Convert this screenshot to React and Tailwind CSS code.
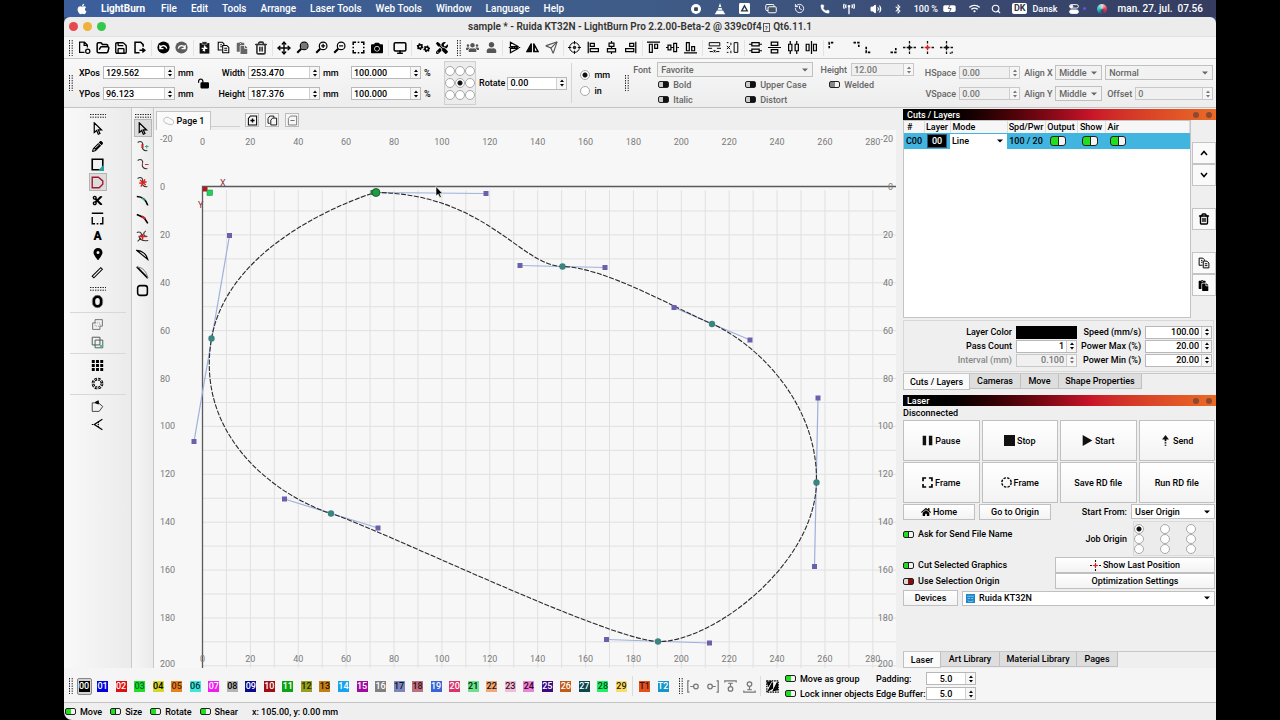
import { Fragment, useState } from "react";
import clsx from "clsx";
import { FaApple, FaBluetoothB, FaCamera, FaCut, FaHome, FaPaste, FaUsers, FaUser, FaWifi } from "react-icons/fa";
import { FaGears, FaLocationDot, FaLockOpen, FaPencil, FaScrewdriverWrench, FaTowerBroadcast } from "react-icons/fa6";
import { FolderOpen, History, Monitor, Move, Phone, Save, Search, Send, Trash2, Volume2 } from "lucide-react";

const Svg = ({ children, className = "size-[13px]", sw = 1.5 }) => (
  <svg viewBox="0 0 16 16" className={className} fill="none" stroke="currentColor" strokeWidth={sw} aria-hidden="true">
    {children}
  </svg>
);

const Grip = ({ wide }) => (
  <svg
    viewBox={wide ? "0 0 16 4" : "0 0 4 16"}
    className={wide ? "h-1 w-4 shrink-0" : "h-4 w-1 shrink-0"}
    fill="none"
    stroke="#222"
    strokeWidth="1"
    strokeDasharray="1.4 1.1"
    aria-hidden="true"
  >
    <path d={wide ? "M0 .5H16M0 3.2H16" : "M.5 0V16M3.2 0V16"} />
  </svg>
);

const Mag = ({ children }) => (
  <Svg>
    <circle cx="10" cy="6" r="4.7" />
    <path d="M6.5 9.5L1.5 14.5" strokeWidth="2.6" />
    {children}
  </Svg>
);

const CrossMark = ({ color = "#111", className = "size-[13px]", extra }) => (
  <Svg className={className} sw={1.6}>
    <path d="M8 0V3M8 13V16M0 8H3M13 8H16" stroke="#111" />
    <path d="M8 4.5V11.5M4.5 8H11.5" stroke={color} />
    <path d="M7 7H9V9H7Z" fill={color} stroke={color} strokeWidth="1" />
    {extra && <path d="M12 15H15V12" stroke="#111" strokeDasharray="2 1" />}
  </Svg>
);

const CopyDocs = ({ className }) => (
  <Svg sw={1.3} className={className}>
    <path d="M6 11H1.500V1.500H6.500L8.500 3.500V5M4 4.500H6M4 7H6" />
    <path d="M7 5.500H12L14.500 8V14.500H7ZM9 9H12.500M9 11.500H12.500" />
  </Svg>
);

// null is a separator, "grip" a drag handle
const mainTools = [
  "grip",
  ["New", <Svg><path d="M8 14H2V1.500H8L11.500 5V8M7.500 1.500V5.500H11.500" /><circle cx="12" cy="12.500" r="2.600" /></Svg>],
  ["Open", <FolderOpen className="size-[14px]" strokeWidth={2.6} />],
  ["Save", <Save className="size-[14px]" strokeWidth={2.3} />],
  ["Export", <Svg><path d="M12.500 7V4.500L9.500 1.500H2.500V14.500H8M8 11.500H14M11.500 9L14.500 11.500L11.500 14" strokeWidth="1.900" /></Svg>],
  null,
  ["Undo", <Svg><circle cx="8" cy="8" r="7.500" fill="#000" stroke="none" /><path d="M4 9C5 4.500 11 4.500 12 9.500M3.500 5V9.500H8" stroke="#fff" /></Svg>],
  ["Redo", <Svg><circle cx="8" cy="8" r="7.500" fill="#5c5c5c" stroke="none" /><path d="M12 9C11 4.500 5 4.500 4 9.500M12.500 5V9.500H8" stroke="#fff" /></Svg>],
  null,
  ["Cut", <Svg><path d="M2 2.500H14V15.500H2Z" fill="#111" stroke="none" /><path d="M5 1H11V4H5Z" fill="#111" stroke="#fff" strokeWidth=".6" /><path d="M8 5.500V13M4.500 9H11.500M6 12L10 7" stroke="#fff" /></Svg>],
  ["Copy", <CopyDocs className="size-[13px]" />],
  ["Paste", <FaPaste className="size-[12px] text-[#666]" />],
  ["Delete", <Trash2 className="size-[14px] text-[#333]" strokeWidth={2.8} />],
  null,
  ["Pan", <Move className="size-[14px]" strokeWidth={2.4} />],
  ["Zoom to page", <Mag><circle cx="10" cy="6" r="4" fill="#777" stroke="none" /></Mag>],
  ["Zoom in", <Mag><path d="M7.500 6H12.500M10 3.500V8.500" /></Mag>],
  ["Zoom out", <Mag><path d="M7.500 6H12.500" /></Mag>],
  ["Frame selection", <Svg sw={1.9}><path d="M1.500 5V1.500H5M11 1.500H14.500V5M14.500 11V14.500H11M5 14.500H1.500V11M7 1.500H9M7 14.500H9M1.500 7V9M14.500 7V9" /></Svg>],
  ["Capture", <FaCamera className="size-[12px]" />],
  null,
  ["Preview", <Monitor className="size-[14px]" strokeWidth={2.6} />],
  null,
  ["Settings", <FaGears className="size-[13px] -rotate-12" />],
  ["Device settings", <FaScrewdriverWrench className="size-[12px]" />],
  "gap",
  "grip",
  ["Group", <FaUsers className="size-[13px] text-[#555]" />],
  ["Ungroup", <FaUser className="size-[11px] text-[#555]" />],
  null,
  ["Flip vertical", <Svg><path d="M3 1.500L13 7H3ZM3 14.500L13 9H3Z" /><path d="M1 8H15" strokeDasharray="2 1" /></Svg>],
  ["Flip horizontal", <Svg><path d="M6.500 3V13H1ZM9.500 3V13H15Z" fill="#111" /><path d="M11 8V12H13.300Z" fill="#fff" stroke="none" /></Svg>],
  ["Mirror across line", <Send className="size-[13px] text-[#555]" />],
  null,
  ["Align centers", <Svg sw={1.2}><circle cx="8" cy="8" r="6" /><circle cx="8" cy="8" r="1.500" fill="#333" /><path d="M8 0V4M8 12V16M0 8H4M12 8H16" /></Svg>],
  ["Align left", <Svg><path d="M1.500 1V15M4 3H9V6.500H4ZM4 9.500H14V13H4Z" /></Svg>],
  ["Align horizontal center", <Svg><path d="M8 0V2M8 14V16M8 6.500V9.500M5 2.500H11V6.500H5ZM3 9.500H13V13.500H3Z" /></Svg>],
  ["Align right", <Svg><path d="M14.500 1V15M7 3H12V6.500H7ZM2 9.500H12V13H2Z" /></Svg>],
  null,
  ["Align top", <Svg><path d="M0 1.500H16M3 4H6.500V14H3ZM9.500 4H13V9H9.500Z" /></Svg>],
  ["Align vertical center", <Svg><path d="M0 8H2M14 8H16M6 8H9.500M2.500 5H6V11H2.500ZM9.500 3H13V13H9.500Z" /></Svg>],
  ["Align bottom", <Svg><path d="M0 14.500H16M3 2H6.500V12H3ZM9.500 7H13V12H9.500Z" /></Svg>],
  null,
  ["Same width", <Svg sw={1.2}><path d="M1.500 2H14.500V6H1.500ZM0 9H5M11 9H16M2 13H6M10 13H14M7 11L9 14M9 11L7 14" /></Svg>],
  ["Same height", <Svg sw={1.2}><path d="M10 2H14.500V14H10ZM1 2H3M6 2V5M1 6L5 10M5 6L1 10M6 12V15M1 14H3" /></Svg>],
  null,
  ["Distribute vertical", <Svg><path d="M3.500 2H12.500V6H3.500ZM3.500 10H12.500V14H3.500ZM0 4H3M13 4H16M0 12H3M13 12H16" /></Svg>],
  ["Space vertical", <Svg><path d="M4 1.500H12V5.500H4ZM4 10.500H12V14.500H4ZM0 8H16" /></Svg>],
  ["Distribute horizontal", <Svg><path d="M2 4H6V12H2ZM10 4H14V12H10ZM4 0V4M4 12V16M12 0V4M12 12V16" /></Svg>],
  ["Space horizontal", <Svg><path d="M1.500 4H5V12H1.500ZM10.500 4H14V12H10.500ZM8 0V16" /></Svg>],
  null,
  ["Move to upper left", <Svg sw={2}><path d="M1.500 9V2H8" strokeDasharray="3 1.500" /></Svg>],
  ["Move to upper right", <Svg sw={2}><path d="M8 2H14.500V9" strokeDasharray="3 1.500" /></Svg>],
  ["Move to lower left", <Svg sw={2}><path d="M1.500 7V14H8" strokeDasharray="3 1.500" /></Svg>],
  ["Move to lower right", <Svg sw={2}><path d="M8 14H14.500V7" strokeDasharray="3 1.500" /></Svg>],
  ["Move to center", <CrossMark />],
  ["Move laser to center", <CrossMark color="#d22" />],
  ["Move to position", <CrossMark extra />],
];

const arrow = <Svg><path d="M4 1V13L7 10.500L9 15L11 14L9 9.800H13Z" /></Svg>;

const drawTools = [
  ["Select", arrow],
  ["Draw lines", <FaPencil className="size-[11px]" />],
  ["Rectangle", <Svg sw={2}><path d="M1.500 1.500H14.500V14.500H1.500Z" /><path d="M15.500 10V15.500H10Z" fill="#2aa198" stroke="#2aa198" /></Svg>],
  ["Edit nodes", <Svg><path d="M1.500 1.500H9L14.500 6V10L10 14.500H1.500Z" stroke="#a01830" strokeWidth="1.700" /></Svg>, true],
  ["Trim", <FaCut className="size-[11px]" />],
  ["Tabs", <Svg><path d="M1.500 6V14.500H5M14.500 6V14.500H11M1 1.500H15M7 14.500H9" strokeWidth="1.700" /></Svg>],
  ["Text", <span className="text-xs leading-3 font-black">A</span>],
  ["Laser position", <FaLocationDot className="size-[12px]" />],
  ["Measure", <Svg sw={1.3}><path d="M1.500 12.500L12 2L14 4L3.500 14.500Z" /></Svg>],
  "grip",
  ["Offset", <Svg><rect x="3.500" y="2" width="9" height="12" rx="4.500" strokeWidth="3.400" /><rect x="1.600" y=".5" width="12.800" height="15" rx="6" stroke="#777" strokeWidth=".8" /></Svg>],
  null,
  ["Weld", <Svg sw={1.1}><path d="M5 2H14V10H11V14H2V6H5Z" stroke="#666" /><path d="M5 6H11V10M5 6V10H11" stroke="#999" strokeDasharray="1.500 1" /></Svg>],
  ["Boolean", <Svg sw={1.2}><path d="M1.500 1.500H11V11H1.500Z" stroke="#555" /><path d="M5 5H14.500V14.500H5Z" stroke="#3a665c" /><path d="M11 11H14V14H11Z" fill="#5b9" stroke="none" /></Svg>],
  null,
  ["Grid array", <Svg><path d="M1 3H15M1 8H15M1 13H15" strokeWidth="3.600" strokeDasharray="3.600 1.600" /></Svg>],
  ["Circular array", <Svg><circle cx="8" cy="8" r="5.500" strokeWidth="3.400" strokeDasharray="3 1.300" /><circle cx="8" cy="8" r="5.500" stroke="#ddd" strokeWidth="1.200" strokeDasharray="2 2.300" /></Svg>],
  null,
  ["Start point", <Svg sw={1.2}><path d="M1.500 3.500H9L14.500 8L10 14H1.500Z" stroke="#444" /><path d="M5 3L9 1V5Z" fill="#111" /></Svg>],
  ["Radius", <Svg><path d="M14 1.500L4 8L14 14.500" /><path d="M1 8H5M9 4.500V11.500" strokeDasharray="1.500 1" /></Svg>],
];

const squiggle = <path d="M2 3C7 0 9 4 8 7S9 14 14 13" stroke="#333" />;
const nodeTools = [
  ["Select node", arrow, true],
  ["Insert node", <Svg sw={1.3}>{squiggle}<path d="M8 5V10" stroke="#c22" strokeWidth="2.500" /><path d="M11 8H15.500M13.200 6V10.500" stroke="#2b8" /></Svg>],
  ["Delete node", <Svg sw={1.3}>{squiggle}<path d="M8 6V9M11 8H15.500" stroke="#c33" /></Svg>],
  ["Delete segment", <Svg sw={1.3}>{squiggle}<path d="M5 5L12 11M11 4L6 13M4 9L13 7" stroke="#d22" strokeWidth="1.800" /></Svg>],
  ["Smooth", <Svg sw={2}><path d="M1 3C8 3 13 8 14.500 14" /><path d="M7 4.500L11 8" stroke="#3a9" strokeWidth="1.600" /></Svg>],
  ["Corner", <Svg sw={2}><path d="M1 3L10 7L14.500 14" /><path d="M7 5.500L11.500 8.500" stroke="#c22" strokeWidth="2.600" /></Svg>],
  ["Break", <Svg sw={1.3}><path d="M1 3C7 1 8 6 5 8S7 14 15 13M12 1C8 4 9 8 14 8M2 14L6 10" stroke="#333" /><path d="M3 8H13M8 5V12" stroke="#c22" strokeWidth="2" /></Svg>],
  ["Curve to line", <Svg sw={1.4}><path d="M1 3C8 3 13 8 14.500 14ZM1 3L14.500 14" /></Svg>],
  ["Line to curve", <Svg sw={1.2}><path d="M1 1L14.500 15" strokeWidth="2" /><path d="M1 1C9 2 13 7 14.500 15" stroke="#777" /></Svg>],
  ["Close path", <Svg><rect x="2" y="2" width="12" height="12" rx="3" strokeWidth="1.900" /></Svg>],
];

const swatches = [
  ["00", "bg-black", "text-white"],
  ["01", "bg-[#0000e0]", "text-white"],
  ["02", "bg-[#e01010]", "text-white"],
  ["03", "bg-[#1fe01f]", "text-[#064]"],
  ["04", "bg-[#d6d62a]", "text-black"],
  ["05", "bg-[#e8821c]", "text-[#521]"],
  ["06", "bg-[#3fe6dc]", "text-[#033]"],
  ["07", "bg-[#f21cf2]", "text-white"],
  ["08", "bg-[#b4b4b4]", "text-black"],
  ["09", "bg-[#0a0a90]", "text-white"],
  ["10", "bg-[#a00c14]", "text-white"],
  ["11", "bg-[#0ca414]", "text-white"],
  ["12", "bg-[#96a01e]", "text-[#220]"],
  ["13", "bg-[#c08014]", "text-[#310]"],
  ["14", "bg-[#14a4f0]", "text-white"],
  ["15", "bg-[#a00ca0]", "text-white"],
  ["16", "bg-[#808080]", "text-white"],
  ["17", "bg-[#7d87b9]", "text-[#113]"],
  ["18", "bg-[#bb6f80]", "text-[#311]"],
  ["19", "bg-[#3a64d8]", "text-white"],
  ["20", "bg-[#d8356f]", "text-white"],
  ["21", "bg-[#6ee08c]", "text-[#021]"],
  ["22", "bg-[#f0a878]", "text-[#210]"],
  ["23", "bg-[#f2bcd6]", "text-[#312]"],
  ["24", "bg-[#e884d6]", "text-[#302]"],
  ["25", "bg-[#3c0a82]", "text-white"],
  ["26", "bg-[#c45a18]", "text-white"],
  ["27", "bg-[#0e4650]", "text-white"],
  ["28", "bg-[#1ef064]", "text-[#042]"],
  ["29", "bg-[#fadc6a]", "text-[#220]"],
];

function ToolList({ tools, vertical }) {
  return tools.map((tool, i) => {
    if (tool === "gap") return <span key={i} className="w-px" />;
    if (tool === "grip")
      return vertical ? (
        <div key={i} className="mt-1.5 mb-px flex h-1 justify-center">
          <Grip wide />
        </div>
      ) : (
        <Grip key={i} />
      );
    if (!tool)
      return vertical ? (
        <hr key={i} className="my-0.5 h-px w-14 border-0 bg-[#d8d8d8]" />
      ) : (
        <span key={i} className="h-4 w-px bg-[#e4e4e4]" />
      );
    const [label, icon, active] = tool;
    return (
      <button
        key={i}
        aria-label={label}
        className={clsx(
          "flex shrink-0 items-center justify-center",
          vertical ? "h-[18px] w-[18px]" : "h-4 w-[15px]",
          active && "border border-[#b4b4b4] bg-[#dcdcdc]"
        )}
      >
        {icon}
      </button>
    );
  });
}

function Spin({ label, value, className = "w-[72px]", disabled, align = "text-left" }) {
  return (
    <span
      className={clsx(
        "flex h-[13px] shrink-0 items-stretch border",
        disabled ? "border-[#c8c8c8] bg-[#f0f0f0] text-[#777]" : "border-[#b8b8b8] bg-white text-black",
        className
      )}
    >
      <input aria-label={label} defaultValue={value} disabled={disabled} className={clsx("w-0 min-w-0 flex-1 px-0.5 font-medium outline-none", align)} />
      <span className="flex w-2.5 items-center justify-center border-l border-[#cfcfcf] bg-[#f6f6f6]">
        <svg viewBox="0 0 6 8" className="h-2 w-1.5" fill="currentColor" aria-hidden="true">
          <path d="M1 3L3 .5L5 3ZM1 5L3 7.500L5 5Z" />
        </svg>
      </span>
    </span>
  );
}

function Dropdown({ label, id, options, className, disabled, pad = "pl-[3px]" }) {
  return (
    <span className={clsx("relative flex h-[15px] shrink-0 items-center border border-[#c0c0c0]", disabled ? "bg-[#f2f2f2] text-[#666]" : "bg-white text-black", className)}>
      <select id={id} aria-label={label} disabled={disabled} className={clsx("w-full appearance-none pr-2 font-medium outline-none disabled:opacity-100", pad)}>
        {options.map((o) => (
          <option key={o}>{o}</option>
        ))}
      </select>
      <svg viewBox="0 0 6 4" className="pointer-events-none absolute right-1 h-1 w-1.5" fill="currentColor" aria-hidden="true">
        <path d="M0 .5H6L3 3.500Z" />
      </svg>
    </span>
  );
}

function Toggle({ label, on, tone = "dark", big, hideLabel, knobRight }) {
  const [checked, setChecked] = useState(!!on);
  return (
    <label className="flex items-center gap-1 whitespace-nowrap">
      <input
        type="checkbox"
        aria-label={hideLabel ? label : undefined}
        checked={checked}
        onChange={() => setChecked(!checked)}
        className={clsx(
          "shrink-0 appearance-none border border-[#222]",
          big ? "h-2.5 w-4 rounded-[3px]" : "h-[7px] w-[11px] rounded-[2px]",
          checked && "bg-[linear-gradient(90deg,#1ee01e_0_50%,#222_50%_60%,#f4f4f4_60%)]",
          !checked && knobRight && "bg-[linear-gradient(90deg,#888_0_50%,#222_50%_60%,#f4f4f4_60%)]",
          !checked && !knobRight && tone === "dark" && "bg-[linear-gradient(90deg,#ccc_0_40%,#111_40%)]",
          !checked && !knobRight && tone === "red" && "bg-[linear-gradient(90deg,#ddd_0_40%,#222_40%_50%,#8c0c0c_50%)]"
        )}
      />
      {!hideLabel && label}
    </label>
  );
}

const Radio = ({ name, label, checked }) => (
  <input
    type="radio"
    name={name}
    aria-label={label}
    defaultChecked={checked}
    className="block size-2.5 appearance-none rounded-full border border-[#a8a8a8] bg-white checked:bg-[radial-gradient(circle,#111_0_2px,#fff_3px)]"
  />
);

const anchors = ["top left", "top", "top right", "left", "center", "right", "bottom left", "bottom", "bottom right"];

function MenuBar() {
  const menus = ["File", "Edit", "Tools", "Arrange", "Laser Tools", "Web Tools", "Window", "Language", "Help"];
  return (
    <header className="flex h-[17px] shrink-0 items-center bg-linear-to-r from-[#3c5f9c] via-[#3f5c88] to-[#353c60] pr-[13px] pl-3 text-[10px] text-white">
      <FaApple className="size-3" />
      <nav className="ml-[13px] flex items-center gap-3.5 whitespace-nowrap">
        <a href="#app" className="mr-0.5 font-bold">LightBurn</a>
        {menus.map((m) => (
          <a key={m} href="#menu">{m}</a>
        ))}
      </nav>
      <div className="ml-auto flex items-center gap-[11px] whitespace-nowrap">
        <div className="mr-1 flex items-center gap-[13px]">
          <Svg className="size-2.5"><circle cx="8" cy="8" r="8" fill="#fff" stroke="none" /><rect x="5" y="5" width="6" height="6" rx="1" fill="#345" stroke="none" /></Svg>
          <Svg className="size-3"><path d="M8 0L11 9H5ZM4 10H12L15 15H1Z" fill="#fff" stroke="none" /><path d="M5.500 6H10.500" stroke="#467" /></Svg>
          <Svg className="size-[11px]"><rect width="16" height="16" rx="2" fill="#fff" stroke="none" /><path d="M8 4L12 11.500H4Z" stroke="#234" strokeWidth="2" /></Svg>
          <Svg className="mx-0.5 size-3" sw={1.3}><rect x="1" y="2" width="11" height="8" rx="1.500" /><rect x="4" y="5" width="11" height="8" rx="1.500" fill="#456" /></Svg>
          <History className="mx-0.5 size-[11px]" />
          <Phone className="size-2.5" fill="#fff" strokeWidth={1} />
          <FaTowerBroadcast className="size-3" />
        </div>
        <Volume2 className="size-3" fill="#fff" />
        <FaBluetoothB className="size-2.5" />
        <span className="flex items-center gap-1 text-[9px]">
          100 %
          <Svg className="h-[9px] w-4"><rect x="-4" y="2" width="22" height="12" rx="3" fill="#fff" stroke="none" /><path d="M8 2L5 8H10L7 14" stroke="#345" /></Svg>
        </span>
        <FaWifi className="size-[11px]" />
        <Search className="size-2.5" strokeWidth={2.6} />
        <span className="flex items-center gap-[5px] text-[9px]">
          <b className="rounded-[2px] bg-white px-0.5 leading-[11px] text-[#334]">DK</b>Dansk
        </span>
        <span className="flex items-center gap-1">
          <Svg className="size-2.5"><rect x="1" y="1" width="14" height="5.500" rx="2.700" /><rect x="1" y="9.500" width="14" height="5.500" rx="2.700" fill="#fff" /><circle cx="4" cy="4" r="2" fill="#fff" /></Svg>
          <i className="size-[3px] rounded-full bg-[#6a4cf0]" />
        </span>
        <i className="size-2.5 rounded-full bg-[conic-gradient(#ddd,#e35,#346,#2cc,#ddd)]" />
        <span>man. 27. jul.&nbsp; 07.56</span>
      </div>
    </header>
  );
}

const Row = ({ children }) => <div className="flex h-[21px] items-center gap-[3px]">{children}</div>;

function PropertyBar() {
  const field = (label, value, w, unit, lw) => (
    <Row>
      {label && <span className={clsx("text-right", lw)}>{label}</span>}
      <Spin label={label || "Scale"} value={value} className={w} />
      <span className="w-4">{unit}</span>
    </Row>
  );
  return (
    <section className="flex h-[49px] shrink-0 items-center border-b border-[#c4c4c4] bg-linear-to-b from-[#f8f8f8] to-[#ededed] pr-[3px] pl-[5px] whitespace-nowrap">
      <Grip />
      <div className="ml-[3px]">
        {field("XPos", "129.562", "w-[72px]", "mm", "w-6")}
        {field("YPos", "96.123", "w-[72px]", "mm", "w-6")}
      </div>
      <button aria-label="Lock aspect ratio" className="ml-1 w-3">
        <FaLockOpen className="size-[11px] -scale-x-100" />
      </button>
      <div className="ml-[3px]">
        {field("Width", "253.470", "w-[72px]", "mm", "w-8")}
        {field("Height", "187.376", "w-[72px]", "mm", "w-8")}
      </div>
      <div className="ml-3">
        {field("", "100.000", "w-[70px]", "%")}
        {field("", "100.000", "w-[70px]", "%")}
      </div>
      <div className="ml-1 grid grid-cols-3 place-items-center gap-y-0.5 border border-[#d0d0d0] bg-[#ececec] py-1">
        {anchors.map((a) => (
          <Radio key={a} name="anchor" label={"Anchor " + a} checked={a === "center"} />
        ))}
      </div>
      <div className="ml-[3px] flex items-center gap-0.5">
        Rotate
        <Spin label="Rotate" value="0.00" className="w-[60px]" />
      </div>
      <div className="ml-1 h-10 w-px bg-[#d4d4d4]" />
      <div className="ml-2 grid gap-1">
        <label className="flex items-center gap-1"><Radio name="unit" checked />mm</label>
        <label className="flex items-center gap-1"><Radio name="unit" />in</label>
      </div>
      <div className="ml-[15px]"><Grip /></div>
      <div className="ml-1 h-12 pt-[3px] text-[#666]">
        <div className="flex h-[15px] items-center gap-1">
          <span className="w-5">Font</span>
          <Dropdown label="Font" options={["Favorite"]} disabled className="w-[156px]" />
          <span className="w-[30px] text-right">Height</span>
          <Spin label="Text height" value="12.00" disabled className="w-[63px]" />
        </div>
        <div className="grid auto-rows-[15px] grid-cols-[87px_84px_auto] items-center pl-[25px]">
          <Toggle label="Bold" />
          <Toggle label="Upper Case" />
          <Toggle label="Welded" knobRight />
          <Toggle label="Italic" />
          <Toggle label="Distort" />
        </div>
      </div>
      <div className="ml-1.5 text-[#666]">
        <Row><span className="w-9 text-right">HSpace</span><Spin label="HSpace" value="0.00" disabled className="w-[61px]" /></Row>
        <Row><span className="w-9 text-right">VSpace</span><Spin label="VSpace" value="0.00" disabled className="w-[61px]" /></Row>
      </div>
      <div className="ml-1 text-[#666]">
        <Row><span className="w-7">Align X</span><Dropdown label="Align X" options={["Middle"]} disabled className="w-[47px]" /></Row>
        <Row><span className="w-7">Align Y</span><Dropdown label="Align Y" options={["Middle"]} disabled className="w-[47px]" /></Row>
      </div>
      <div className="ml-[3px] flex-1 text-[#666]">
        <Row><Dropdown label="Text style" options={["Normal"]} disabled className="w-full" /></Row>
        <Row><span className="pl-0.5">Offset</span><Spin label="Offset" value="0" disabled className="flex-1" /></Row>
      </div>
    </section>
  );
}

/* workspace geometry */
const STEP = 23.94;
const X0 = 202.5;
const Y0 = 187;
const span = (from, to, by) => Array.from({ length: (to - from) / by + 1 }, (_, i) => from + i * by);
const rulerY = (i) => Math.min(Y0 + 3 + i * 2 * STEP, 667);

const handles = [
  [375, 192.5, 486, 193.5],
  [520, 265.5, 605, 267.5],
  [674, 307.5, 750, 340],
  [818, 398, 814.5, 566.5],
  [709.5, 643, 606.5, 639.5],
  [378, 528, 284.5, 499],
  [194, 441.5, 229.5, 235.5],
];
const mids = [[562.5, 266.5], [712, 324], [816.5, 482.5], [658, 641.5], [331, 513.5], [211.5, 338.5]];

function Workspace() {
  return (
    <svg viewBox="154 130 745 538" preserveAspectRatio="xMinYMin slice" className="block min-h-0 w-full flex-1 bg-[#f7f7f7]" role="img" aria-label="Workspace">
      <g stroke="#e0e0e0" strokeWidth="1">
        {span(1, 28, 1).map((i) => (
          <line key={i} x1={X0 + i * STEP} x2={X0 + i * STEP} y1="190" y2="668" />
        ))}
        {span(1, 20, 1).map((i) => (
          <line key={i} x1={X0} x2="896" y1={Y0 + i * STEP} y2={Y0 + i * STEP} />
        ))}
      </g>
      <path d="M896 186.500H202.500V668" fill="none" stroke="#5a5a5a" strokeWidth="1.300" />
      <g fill="#7a7a7a" fontSize="9" fontWeight="400">
        {span(0, 14, 1).map((i) => (
          <g key={i} textAnchor="middle">
            <text x={X0 + i * 2 * STEP} y="145">{i * 20}</text>
            <text x={X0 + i * 2 * STEP} y="662">{i * 20}</text>
          </g>
        ))}
        <text x="160" y="142">-20</text>
        <text x="893" y="142" textAnchor="end">-20</text>
        {span(0, 10, 1).map((i) => (
          <g key={i}>
            <text x="160" y={rulerY(i)}>{i * 20}</text>
            <text x="893" y={rulerY(i)} textAnchor="end">{i * 20}</text>
          </g>
        ))}
      </g>
      <g fill="#8a3040" fontSize="9" fontWeight="400">
        <text x="220" y="186">X</text>
        <text x="198" y="208">Y</text>
      </g>
      <rect x="203" y="187" width="4.500" height="4.500" fill="#c0101c" />
      <rect x="207" y="190" width="5.500" height="5.500" fill="#24d05a" stroke="#1a9a44" strokeWidth=".6" />
      <g stroke="#9fb0dc" strokeWidth="1.200">
        {handles.map(([x1, y1, x2, y2], i) => (
          <line key={i} x1={x1} y1={y1} x2={x2} y2={y2} />
        ))}
      </g>
      <path
        d="M375 192.500C486 193.500 520 265.500 562.500 266.500C605 267.500 674 307.500 712 324C750 340 818 398 816.500 482.500C814.500 566.500 709.500 643 658 641.500C606.500 639.500 378 528 331 513.500C284.500 499 194 441.500 211.500 338.500C229.500 235.500 375 192.500 375 192.500"
        fill="none"
        stroke="#2a2a2a"
        strokeWidth="1.100"
        strokeDasharray="5 1.500"
      />
      <g fill="#6a60ac">
        {handles.map(([x1, y1, x2, y2], i) => (
          <Fragment key={i}>
            {i > 0 && <rect x={x1 - 2.5} y={y1 - 2.5} width="5" height="5" />}
            <rect x={x2 - 2.5} y={y2 - 2.5} width="5" height="5" />
          </Fragment>
        ))}
      </g>
      <g fill="#3c8480">
        {mids.map(([x, y]) => (
          <circle key={x} cx={x} cy={y} r="3.200" />
        ))}
      </g>
      <rect x="370.500" y="190" width="5" height="5" fill="#3a7a52" />
      <circle cx="376" cy="192.500" r="4" fill="#1f9c40" stroke="#154a28" strokeWidth=".8" />
      <path d="M436 186.500V196L438.200 194.200L439.800 197.600L441.300 196.900L439.800 193.600H442.600Z" fill="#000" stroke="#fff" strokeWidth=".6" />
      <rect x="896" y="130" width="3" height="538" fill="#efefef" />
    </svg>
  );
}

const DockTitle = ({ children }) => (
  <h2 className="flex h-[11px] shrink-0 items-center bg-linear-to-r from-black from-10% via-[#c81428] via-60% to-[#ec6a24] pr-1 pl-1 font-medium text-white">
    {children}
    <span className="ml-auto flex gap-[7px]">
      <button aria-label="Float panel" className="size-1.5 rounded-full bg-[#8a4a34]" />
      <button aria-label="Close panel" className="size-1.5 rounded-full bg-[#8a4a34]" />
    </span>
  </h2>
);

const Tabs = ({ items }) => (
  <div role="tablist" className="flex h-[17px] shrink-0 items-start border-t border-[#c8c8c8]">
    {items.map(([t, w], i) => (
      <button
        key={t}
        role="tab"
        aria-selected={i === 0}
        className={clsx("border-r border-b border-[#c0c0c0] whitespace-nowrap", w, i === 0 ? "h-4 border-l bg-[#fafafa]" : "h-[15px] bg-[#dedede]")}
      >
        {t}
      </button>
    ))}
  </div>
);

const btn = "flex items-center justify-center gap-0.5 border border-[#c0c0c0] bg-linear-to-b from-white to-[#f3f3f3] whitespace-nowrap";

function CutsPanel() {
  const side = "flex h-[22px] w-6 items-center justify-center border border-[#c4c4c4] bg-[#fafafa]";
  const headers = ["#", "Layer", "Mode", "Spd/Pwr", "Output", "Show", "Air"];
  return (
    <section className="flex flex-col">
      <DockTitle>Cuts / Layers</DockTitle>
      <div className="flex h-[198px]">
        <div className="flex-1 border border-[#c4c4c4] bg-white">
          <table className="w-full table-fixed">
            <colgroup>
              <col className="w-5" />
              <col className="w-[26px]" />
              <col className="w-[57px]" />
              <col className="w-[38px]" />
              <col className="w-8" />
              <col className="w-7" />
              <col />
            </colgroup>
            <thead>
              <tr className="h-3 bg-[#f6f6f6]">
                {headers.map((h, i) => (
                  <th key={h} className={clsx("border-r border-[#dcdcdc] p-0 leading-3 font-medium", i === 0 && "pl-[3px] text-left", i === 2 || i === 6 ? "pl-0.5 text-left" : "text-center")}>{h}</th>
                ))}
              </tr>
            </thead>
            <tbody>
              <tr className="h-4 bg-[#42b4e0] text-center">
                <td className="p-0">C00</td>
                <td className="p-0"><span className="mx-auto block w-5 border border-[#2a5a78] bg-black leading-3 text-white">00</span></td>
                <td className="p-0"><Dropdown label="Mode" options={["Line"]} className="w-full border-0" pad="pl-0.5" /></td>
                <td className="p-0">100 / 20</td>
                <td className="p-0 pl-[5px]"><Toggle label="Output" on big hideLabel /></td>
                <td className="p-0 pl-[5px]"><Toggle label="Show" on big hideLabel /></td>
                <td className="p-0 pl-[5px]"><Toggle label="Air" on big hideLabel /></td>
              </tr>
            </tbody>
          </table>
        </div>
        <div className="flex w-[25px] flex-col items-center pt-[22px]">
          <button aria-label="Move layer up" className={side}><Svg className="size-2" sw={3}><path d="M2 12L8 5L14 12" /></Svg></button>
          <button aria-label="Move layer down" className={side}><Svg className="size-2" sw={3}><path d="M2 4L8 11L14 4" /></Svg></button>
          <button aria-label="Delete layer" className={clsx(side, "my-[22px]")}><Trash2 className="size-3" strokeWidth={2.8} /></button>
          <button aria-label="Copy layer" className={side}><CopyDocs className="size-3" /></button>
          <button aria-label="Paste layer" className={side}><FaPaste className="size-[11px]" /></button>
        </div>
      </div>
      <div className="mt-0.5 mr-0.5 grid h-[52px] auto-rows-[14px] grid-cols-[108px_61px_1fr_67px] content-center items-center gap-x-1 border border-[#d8d8d8] pr-[3px] text-right whitespace-nowrap">
        <span>Layer Color</span>
        <button aria-label="Layer color" className="h-[13px] bg-black" />
        <span>Speed (mm/s)</span>
        <Spin label="Speed" value="100.00" align="text-right" className="w-full" />
        <span>Pass Count</span>
        <Spin label="Pass count" value="1" align="text-right" className="w-full" />
        <span>Power Max (%)</span>
        <Spin label="Power max" value="20.00" align="text-right" className="w-full" />
        <span className="text-[#888]">Interval (mm)</span>
        <Spin label="Interval" value="0.100" align="text-right" disabled className="w-full" />
        <span>Power Min (%)</span>
        <Spin label="Power min" value="20.00" align="text-right" className="w-full" />
      </div>
      <div className="mt-px">
        <Tabs items={[["Cuts / Layers", "w-[67px]"], ["Cameras", "w-[51px]"], ["Move", "w-[38px]"], ["Shape Properties", "w-[83px]"]]} />
      </div>
    </section>
  );
}

function LaserPanel() {
  const big = [
    ["Pause", <Svg className="size-[11px]"><path d="M1 1H6V15H1ZM10 1H15V15H10Z" fill="#111" stroke="none" /></Svg>],
    ["Stop", <span className="size-[11px] bg-[#111]" />],
    ["Start", <Svg className="size-[11px]"><path d="M1 0L15 8L1 16Z" fill="#111" stroke="none" /></Svg>],
    ["Send", <Svg className="size-[11px]" sw={2.4}><path d="M8 4V9M8 10.500V12.500M8 14V15.500" /><path d="M3 6.500L8 0L13 6.500Z" fill="#111" stroke="none" /></Svg>],
    ["Frame", <Svg className="size-[11px]" sw={2.4}><path d="M1.500 6V1.500H6M10 1.500H14.500V6M14.500 10V14.500H10M6 14.500H1.500V10" /></Svg>],
    ["Frame", <Svg className="size-[11px]" sw={2}><circle cx="8" cy="8" r="6.800" strokeDasharray="3.600 1.750" /></Svg>],
    ["Save RD file"],
    ["Run RD file"],
  ];
  return (
    <section className="mt-[5px] flex flex-1 flex-col">
      <DockTitle>Laser</DockTitle>
      <p className="flex h-3.5 items-center">Disconnected</p>
      <div className="mr-px grid grid-cols-4 gap-x-0.5 gap-y-px">
        {big.map(([t, icon], i) => (
          <button key={i} className={clsx(btn, "h-[41px]")}>{icon}{t}</button>
        ))}
      </div>
      <div className="mt-px mr-px flex h-4 items-stretch gap-1">
        <button className={clsx(btn, "w-[72px]")}><FaHome className="size-2.5" />Home</button>
        <button className={clsx(btn, "w-[72px]")}>Go to Origin</button>
        <label htmlFor="start-from" className="ml-auto self-center">Start From:</label>
        <Dropdown id="start-from" options={["User Origin"]} className="h-4 w-[84px]" />
      </div>
      <div className="mr-0.5 flex h-[37px] items-center">
        <div className="mt-2 self-start">
          <Toggle label="Ask for Send File Name" on />
        </div>
        <span className="mr-1.5 ml-auto">Job Origin</span>
        <div className="grid h-[35px] w-[81px] grid-cols-[26px_26px_auto] content-center border border-[#dadada] bg-[#ececec]">
          {anchors.map((a, i) => (
            <Radio key={a} name="job" label={"Job origin " + a} checked={i === 0} />
          ))}
        </div>
      </div>
      <div className="mr-px grid auto-rows-[16px] grid-cols-[1fr_160px] items-stretch">
        <Toggle label="Cut Selected Graphics" on />
        <button className={btn}><CrossMark color="#d22" className="size-[11px]" />Show Last Position</button>
        <Toggle label="Use Selection Origin" tone="red" />
        <button className={btn}>Optimization Settings</button>
      </div>
      <div className="mt-px mr-px flex gap-1">
        <button className={clsx(btn, "h-4 w-[55px]")}>Devices</button>
        <div className="relative flex flex-1 items-center">
          <Dropdown label="Device" options={["Ruida KT32N"]} className="h-4 w-full" pad="pl-4" />
          <span className="pointer-events-none absolute left-1">
            <Svg className="size-[9px]"><rect width="16" height="16" fill="#1c86c8" stroke="none" /><path d="M2 4H14M3 8H7M9 8H13M3 12C6 14 10 14 13 12" stroke="#8fd0f4" /></Svg>
          </span>
        </div>
      </div>
      <div className="mt-auto">
        <Tabs items={[["Laser", "w-[38px]"], ["Art Library", "w-[59px]"], ["Material Library", "w-[77px]"], ["Pages", "w-[41px]"]]} />
      </div>
    </section>
  );
}

const Chip = ({ id, bg, fg, active }) => (
  <button
    aria-label={"Layer " + id}
    className={clsx("flex h-[17px] w-[15px] items-center justify-center", active && "rounded-[2px] border border-[#888] bg-[#d4d4d4]")}
  >
    <span className={clsx("w-[11px] shrink-0 text-center leading-[11px]", bg, fg)}>{id}</span>
  </button>
);

function BottomBar() {
  const dockIcons = [
    ["Dock left", <path d="M3 1H1V15H3M4 8H8" />, 11, 8],
    ["Dock right", <path d="M13 1H15V15H13M12 8H8" />, 5, 8],
    ["Dock up", <path d="M1 3V1H15V3M5 4H11M8 4V8" />, 8, 11],
    ["Dock down", <path d="M1 13V15H15V13M5 12H11M8 12V8" />, 8, 5],
  ];
  const sep = <span className="h-5 w-px bg-[#dcdcdc]" />;
  return (
    <section className="flex h-[35px] shrink-0 items-center border-b border-[#c4c4c4] bg-[#f5f5f5] pt-0.5 pl-[5px] whitespace-nowrap">
      <div className="flex w-[711px] shrink-0 items-center justify-between">
        <Grip />
        {swatches.map(([id, bg, fg], i) => (
          <Chip key={id} id={id} bg={bg} fg={fg} active={i === 0} />
        ))}
        {sep}
        <Chip id="T1" bg="bg-[#e2501c]" fg="text-[#411]" />
        <Chip id="T2" bg="bg-[#1496cc]" fg="text-white" />
        <span className="w-px" />
        <Grip />
        {dockIcons.map(([label, path, cx, cy]) => (
          <button key={label} aria-label={label} className="flex w-[15px] justify-center text-[#777]">
            <Svg>{path}<circle cx={cx} cy={cy} r="2.800" /></Svg>
          </button>
        ))}
        {sep}
        <button aria-label="Nest" className="flex w-[15px] justify-center">
          <Svg><path d="M1 1H15V15H1Z" strokeDasharray="2 1" /><path d="M3 13L8 3L8 10ZM9 13L14 3V12ZM2 3L6 2L3 7Z" fill="#111" /></Svg>
        </button>
      </div>
      <div className="ml-[5px] grid w-[90px] gap-[5px] leading-[10px]">
        <Toggle label="Move as group" on />
        <Toggle label="Lock inner objects" on />
      </div>
      <div className="ml-px grid grid-cols-[50px_50px] items-center gap-y-0.5">
        <span>Padding:</span>
        <Spin label="Padding" value="5.0" align="text-center" className="w-full" />
        <span>Edge Buffer:</span>
        <Spin label="Edge buffer" value="5.0" align="text-center" className="w-full" />
      </div>
    </section>
  );
}

export default function App() {
  const tabBtn = "flex size-3.5 items-center justify-center border border-[#bbb] bg-[#f6f6f6]";
  return (
    <div className="h-screen overflow-hidden bg-black px-16 font-[Roboto,'Liberation_Sans',sans-serif] text-[9px] leading-3 font-medium text-black">
      <div className="flex h-full flex-col overflow-hidden rounded-bl-[8px] bg-[#efefef]">
        <MenuBar />
        <div className="shrink-0 bg-[#3b4a70]">
          <div className="flex h-[19px] items-center rounded-t-[6px] bg-[#ececec] px-[5px]">
            <div className="flex w-12 gap-[5px]">
              <button aria-label="Close" className="size-[9px] rounded-full bg-[#e6484c]" />
              <button aria-label="Minimize" className="size-[9px] rounded-full bg-[#eeb13a]" />
              <button aria-label="Zoom window" className="size-[9px] rounded-full bg-[#34c84a]" />
            </div>
            <h1 className="mr-12 flex-1 text-center text-[10px] font-semibold text-[#333]">
              sample * - Ruida KT32N - LightBurn Pro 2.2.00-Beta-2 @ 339c0f4
              <span className="mx-px inline-block border border-[#555] px-px text-[6px] leading-[7px]">?</span> Qt6.11.1
            </h1>
          </div>
        </div>
        <div className="flex h-[23px] shrink-0 items-center border-y border-t-[#e2e2e2] border-b-[#c8c8c8] bg-[#f6f6f6] pl-[5px]">
          <div className="flex w-[885px] items-center justify-between">
            <ToolList tools={mainTools} />
          </div>
        </div>
        <PropertyBar />
        <main className="flex min-h-0 flex-1">
          <aside className="flex w-[68px] shrink-0 flex-col items-center border-r border-[#c8c8c8] bg-linear-to-r from-[#f9f9f9] to-[#ebebeb]">
            <ToolList tools={["grip", ...drawTools]} vertical />
          </aside>
          <aside className="flex w-[22px] shrink-0 flex-col items-center border-r border-[#c8c8c8] bg-linear-to-r from-[#f6f6f6] to-[#ebebeb]">
            <ToolList tools={["grip", ...nodeTools]} vertical />
          </aside>
          <div className="flex min-w-0 flex-1 flex-col">
            <div className="flex h-[22px] shrink-0 items-center pl-0.5">
              <button className="flex h-[19px] w-[55px] items-center justify-center gap-0.5 self-end border border-b-0 border-[#c4c4c4] bg-[#fafafa]">
                <Svg className="size-3" sw={1}><path d="M5 3C8 3 9 5 12 6C16 8 14 13 11 13C9 13 7 12 4 11C-1 9 1 3 5 3Z" stroke="#aaa" /></Svg>
                Page 1
              </button>
              <div className="h-[19px] w-[29px] self-start border-b border-[#d0d0d0]" />
              <div className="ml-[5px] flex gap-1.5 pt-0.5">
                <button aria-label="Add page" className={tabBtn}><Svg className="size-[11px]"><path d="M5 1.500H14V14.500H2V5Z" /><path d="M8 5V11M5 8H11" strokeWidth="2" /></Svg></button>
                <button aria-label="Duplicate page" className={tabBtn}><Svg className="size-[11px]" sw={1.3}><path d="M4 12H1.500V5L4 1.500H10V4M8 4.500H14V14.500H5.500V7.500Z" /></Svg></button>
                <button aria-label="Remove page" className={tabBtn}><Svg className="size-[11px]" sw={1.2}><path d="M5 1.500H14V14.500H2V5Z" stroke="#666" /><path d="M5 8H11" stroke="#555" /></Svg></button>
              </div>
            </div>
            <Workspace />
          </div>
          <div className="ml-1 flex w-[313px] shrink-0 flex-col pt-px">
            <CutsPanel />
            <LaserPanel />
          </div>
        </main>
        <BottomBar />
        <footer className="flex h-[17px] shrink-0 items-center gap-2 pl-px whitespace-nowrap">
          <Toggle label="Move" on />
          <Toggle label="Size" on />
          <Toggle label="Rotate" on />
          <Toggle label="Shear" on />
          <span className="ml-1.5">x: 105.00, y: 0.00 mm</span>
        </footer>
      </div>
    </div>
  );
}
